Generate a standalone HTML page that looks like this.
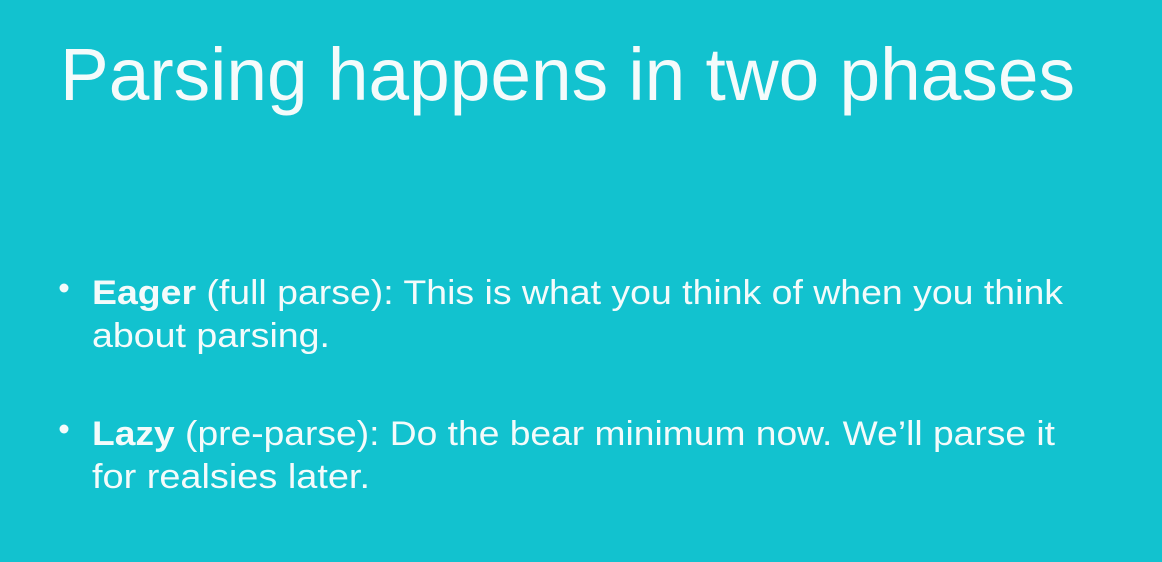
<!DOCTYPE html>
<html><head><meta charset="utf-8"><style>
html,body{margin:0;padding:0}
body{width:1162px;height:562px;background:#12C2CF;overflow:hidden}
svg{display:block}
text{font-family:"Liberation Sans",sans-serif;fill:#F4FBFB}
</style></head><body>
<svg width="1162" height="562" viewBox="0 0 1162 562">
<text x="60" y="100" font-size="74" textLength="1015" lengthAdjust="spacingAndGlyphs">Parsing happens in two phases</text>
<circle cx="64" cy="288" r="4.5" fill="#F4FBFB"/>
<text x="92" y="304" font-size="34" textLength="971" lengthAdjust="spacingAndGlyphs"><tspan font-weight="bold">Eager</tspan> (full parse): This is what you think of when you think</text>
<text x="92" y="347" font-size="34" textLength="238" lengthAdjust="spacingAndGlyphs">about parsing.</text>
<circle cx="64" cy="429" r="4.5" fill="#F4FBFB"/>
<text x="92" y="445" font-size="34" textLength="963" lengthAdjust="spacingAndGlyphs"><tspan font-weight="bold">Lazy</tspan> (pre-parse): Do the bear minimum now. We’ll parse it</text>
<text x="92" y="488" font-size="34" textLength="278" lengthAdjust="spacingAndGlyphs">for realsies later.</text>
</svg>
</body></html>
